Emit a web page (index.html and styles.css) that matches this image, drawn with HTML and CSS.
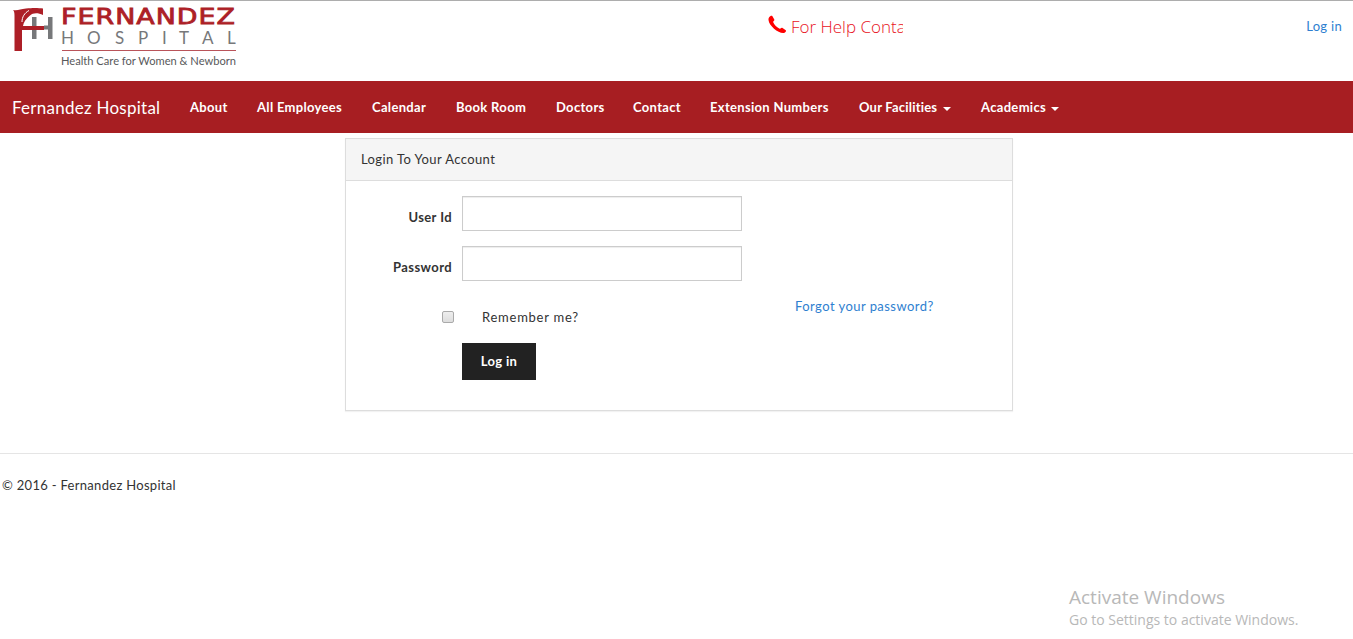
FILE: index.html
```
<!DOCTYPE html>
<html lang="en">
<head>
<meta charset="utf-8">
<title>Log in - Fernandez Hospital</title>
<link rel="stylesheet" href="styles.css">
</head>
<body>
<header class="top">
  <svg class="logo" width="240" height="72" viewBox="0 0 240 72" role="img" aria-label="Fernandez Hospital">
    <path class="grey" d="M32 17h4.500v22H32zM48 17h4.500v22H48zM44 25.500h4v4h-4z"/>
    <path class="red" d="M13 10C18 11 20 9 26 8.500C34 7.500 39 8 43 8.500V15C38 12.500 33 12.500 30 15.500C26 19 23.500 22 23 26H44V30H22V51H14.500V16C14.500 12.500 14 11 13 10z"/>
    <path class="shine" d="M22 22C22 17 24.500 13 29 10.500"/>
    <text class="name" x="61" y="23.500" textLength="175" lengthAdjust="spacingAndGlyphs">FERNANDEZ</text>
    <text class="sub" y="43.500" x="61 87 115 138 162 179 202 227">HOSPITAL</text>
    <path class="rule" d="M62 50.500H236"/>
    <text class="tag" x="61" y="64.500" textLength="175" lengthAdjust="spacingAndGlyphs">Health Care for Women &amp; Newborn</text>
  </svg>
  <div class="help">
    <svg class="phone" width="19" height="19" viewBox="0 0 19 19"><path d="M1 2.500C2 1 3.500 .3 4.300 1L6.300 4.600C6.800 5.500 5.400 6.300 5.100 7C6 9.500 9 12.700 11.700 13.800C12.500 13.700 13.300 12.300 14.200 12.800L17.800 15.300C18.600 16 17.300 17.700 16 18C11 19 1 11 .5 5C.3 4 .5 3.200 1 2.500z"/></svg>
    <span>For Help Conta</span>
  </div>
  <a class="login-link" href="#">Log in</a>
</header>
<nav class="navbar">
  <a class="brand" href="#">Fernandez Hospital</a>
  <a class="i1" href="#">About</a>
  <a class="i2" href="#">All Employees</a>
  <a class="i3" href="#">Calendar</a>
  <a class="i4" href="#">Book Room</a>
  <a class="i5" href="#">Doctors</a>
  <a class="i6" href="#">Contact</a>
  <a class="i7" href="#">Extension Numbers</a>
  <a class="i8" href="#">Our Facilities<i class="caret"></i></a>
  <a class="i9" href="#">Academics<i class="caret"></i></a>
</nav>
<main class="panel">
  <h1 class="panel-head">Login To Your Account</h1>
  <form class="panel-body">
    <div class="fields">
      <div class="row"><label for="u">User Id</label><input class="field" id="u" type="text"></div>
      <div class="row"><label for="p">Password</label><input class="field" id="p" type="password"></div>
      <div class="remember"><input class="check" id="r" type="checkbox"><label for="r">Remember me?</label></div>
      <button class="submit" type="button">Log in</button>
    </div>
    <a class="forgot" href="#">Forgot your password?</a>
  </form>
</main>
<footer class="footer">© 2016 - Fernandez Hospital</footer>
<aside class="activate"><div class="activate-title">Activate Windows</div><div class="activate-text">Go to Settings to activate Windows.</div></aside>
</body>
</html>
```
FILE: styles.css
```
* { box-sizing: border-box; }
body { margin: 0; height: 639px; overflow: hidden; background: #fff; color: #333; font: 13px/20px Lato, "Open Sans", sans-serif; letter-spacing: .3px; }
a { color: #2f7fd0; text-decoration: none; white-space: nowrap; }
.top { display: flex; align-items: flex-start; height: 81px; border-top: 1px solid #adadad; }
.logo { flex: none; margin-top: -1px; }
.red, .name { fill: #ad1f27; }
.grey, .sub { fill: #77787a; }
.shine { fill: none; stroke: #fff; stroke-width: 1; }
.name { font: 400 20.500px "DejaVu Sans", sans-serif; letter-spacing: .8px; stroke: #ad1f27; stroke-width: .8; }
.sub { font: 17px Lato, sans-serif; letter-spacing: 0; }
.rule { stroke: #b9545a; stroke-width: 1; }
.tag { font: 10.500px Lato, sans-serif; letter-spacing: 0; fill: #58595b; }
.help { display: flex; margin: 14px 0 0 527px; width: 136px; color: #e81123; font: 300 17px/24px "Open Sans", sans-serif; letter-spacing: 0; white-space: nowrap; overflow: hidden; }
.phone { flex: none; margin: 0 4px 0 1px; fill: #f00; }
.login-link { margin: 15px 11px 0 auto; }
.navbar { display: flex; align-items: center; gap: 30px; height: 52px; padding: 0 12px; background: #a71e22; }
.navbar a { color: #fff; font-weight: 700; letter-spacing: .32px; }
.navbar .brand { width: 148px; padding-top: 1px; font-size: 17px; font-weight: 400; letter-spacing: .25px; }
.i1 { width: 37px; } .i2 { width: 85px; } .i3 { width: 54px; }
.i4 { width: 70px; } .i5 { width: 47px; } .i6 { width: 47px; }
.i7 { width: 119px; } .i8 { width: 92px; } .i9 { width: 78px; }
.i8, .i9 { display: flex; align-items: center; justify-content: space-between; }
.navbar .i8 { letter-spacing: .2px; }
.caret { border: 4px solid transparent; border-top-color: #fff; border-bottom: 0; margin-top: 3px; }
.panel { width: 668px; height: 273px; margin: 5px 0 0 345px; border: 1px solid #ddd; box-shadow: 0 1px 1px rgba(0,0,0,.05); }
.panel-head { margin: 0; height: 42px; padding: 10px 15px; background: #f5f5f5; border-bottom: 1px solid #ddd; font-size: 13px; line-height: 21px; font-weight: 400; letter-spacing: .4px; }
.panel-body { display: flex; padding-top: 15px; }
.fields { width: 396px; }
.row { display: flex; justify-content: flex-end; gap: 10px; height: 35px; margin-bottom: 15px; }
.row label { padding-top: 11px; font-weight: 700; letter-spacing: .4px; }
.field { width: 280px; height: 35px; border: 1px solid #ccc; box-shadow: inset 0 1px 1px rgba(0,0,0,.075); background: #fff; }
.remember { display: flex; align-items: center; height: 20px; margin: 26px 0 16px 96px; letter-spacing: .75px; }
.check { appearance: none; width: 12px; height: 12px; margin: 0 28px 0 0; border: 1px solid #aaa; border-radius: 2px; background: linear-gradient(#eee, #ddd); }
.submit { display: block; width: 74px; height: 37px; margin-left: 116px; padding: 0 0 1px; border: 0; background: #222; color: #fff; font: 700 13px Lato, sans-serif; letter-spacing: .35px; }
.forgot { margin: 100px 0 0 53px; letter-spacing: .45px; }
.footer { margin-top: 42px; padding: 21px 2px 0; border-top: 1px solid #e5e5e5; }
.activate { position: absolute; left: 1069px; top: 584px; color: #b8b8b8; font-family: "Open Sans", sans-serif; letter-spacing: 0; white-space: nowrap; }
.activate-title { font-size: 19px; line-height: 26px; }
.activate-text { font-size: 14px; line-height: 20px; }
```
